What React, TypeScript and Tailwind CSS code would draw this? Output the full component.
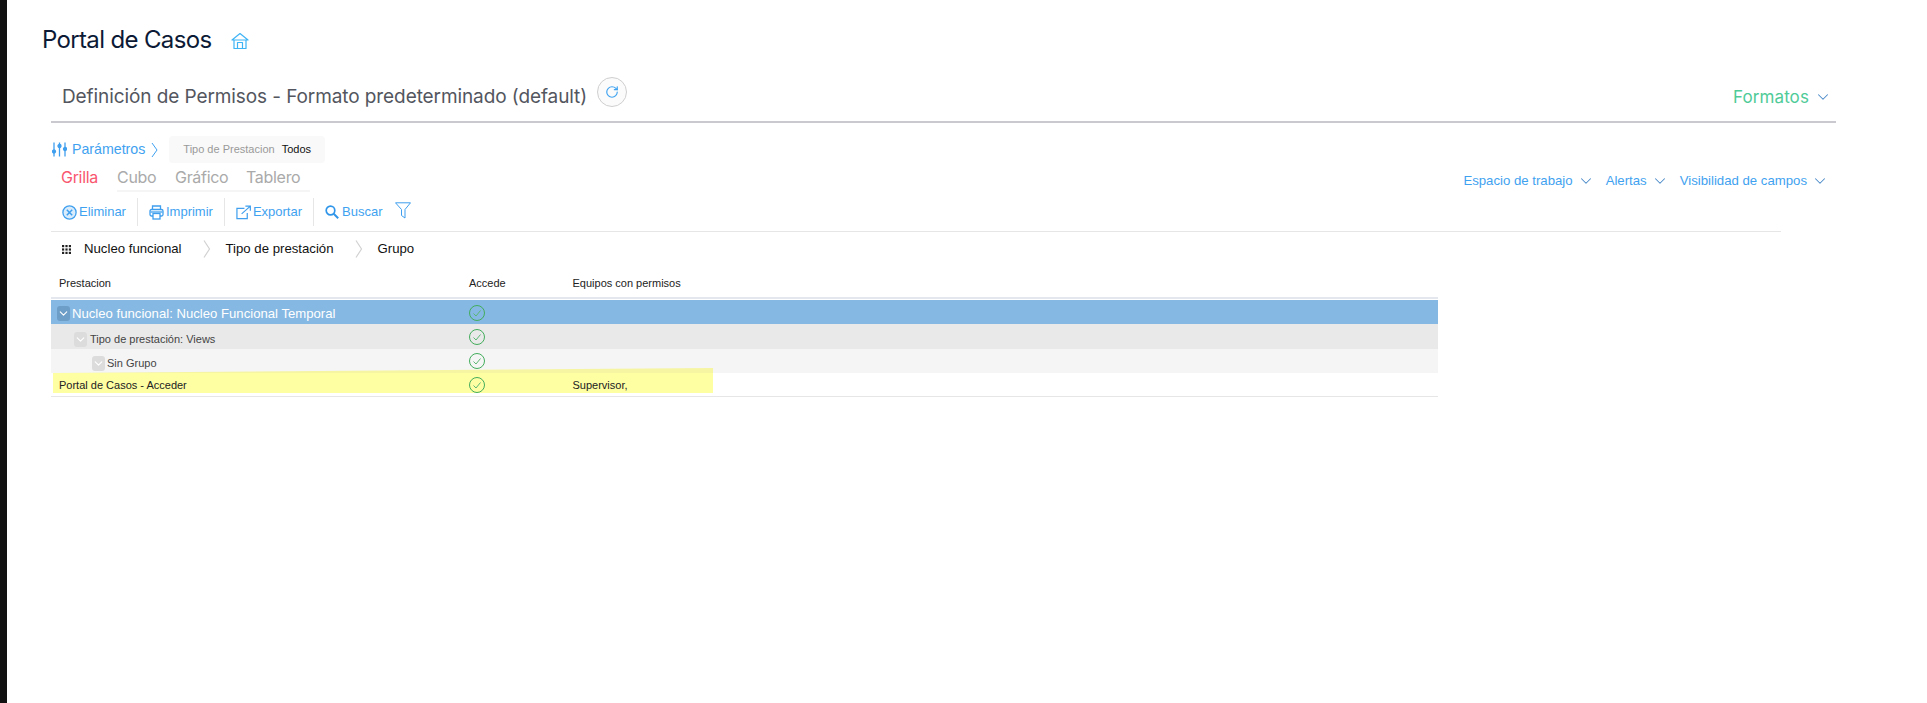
import { ChevronDown, RotateCw } from "lucide-react";

const sans = "font-['Liberation_Sans',Arial,sans-serif]";
const display = "font-['Inter','Noto_Sans',sans-serif]";

function HomeIcon() {
  return (
    <svg width="18" height="18" viewBox="0 0 18 18" fill="none" stroke="#3fb4f5" strokeWidth="1.2" strokeLinejoin="round">
      <path d="M1 8 L9 1.5 L17 8 Z" />
      <path d="M3 8 V16.5 H15 V8" />
      <path d="M6.5 16.5 V10.5 H11.5 V16.5" />
    </svg>
  );
}

function SlidersIcon() {
  return (
    <svg width="15" height="15" viewBox="0 0 15 15" fill="#3f9fee" stroke="#3f9fee" strokeWidth="1.3">
      <path d="M2 0.5 V14.5 M7.5 0.5 V14.5 M13 0.5 V14.5" />
      <circle cx="2" cy="9.5" r="1.5" />
      <circle cx="7.5" cy="4" r="1.5" />
      <circle cx="13" cy="7" r="1.5" />
    </svg>
  );
}

function EliminarIcon() {
  return (
    <svg width="15" height="15" viewBox="0 0 15 15" fill="none" stroke="#3f9fee" strokeWidth="1.3">
      <circle cx="7.5" cy="7.5" r="6.6" fill="#d9ecfb" />
      <path d="M4.8 4.8 L10.2 10.2 M10.2 4.8 L4.8 10.2" strokeWidth="1.5" />
    </svg>
  );
}

function PrintIcon() {
  return (
    <svg width="15" height="15" viewBox="0 0 15 15" fill="none" stroke="#3f9fee" strokeWidth="1.3">
      <path d="M3.5 4.5 V1 H11.5 V4.5" />
      <rect x="1" y="4.5" width="13" height="6.5" rx="1.5" />
      <rect x="4" y="8.5" width="7" height="5.5" fill="#fff" />
      <path d="M1.5 7 H13.5" />
    </svg>
  );
}

function ExportIcon() {
  return (
    <svg width="15" height="15" viewBox="0 0 16 15" fill="none" stroke="#3f9fee" strokeWidth="1.3">
      <path d="M9 3 H1 V14 H12 V8" />
      <path d="M6 9 L15 1 M10 0.8 H15.3 V5.5" />
    </svg>
  );
}

function SearchIcon() {
  return (
    <svg className="mr-[1px]" width="14" height="14" viewBox="0 0 14 14" fill="none" stroke="#2f95e8" strokeWidth="1.7">
      <circle cx="5.5" cy="5.5" r="4.3" />
      <path d="M8.7 8.7 L13.2 13.2" strokeWidth="2" />
    </svg>
  );
}

function FilterIcon() {
  return (
    <svg width="16" height="17" viewBox="0 0 16 17" fill="none" stroke="#3f9fee" strokeWidth="1" strokeLinejoin="round">
      <path d="M0.5 0.8 H15.5 L10 7.5 V16 L6.5 13.5 V7.5 Z" />
    </svg>
  );
}

function GridIcon() {
  return (
    <svg width="9" height="9" viewBox="0 0 9 9" fill="#222">
      {[0, 3.4, 6.8].map((y) =>
        [0, 3.4, 6.8].map((x) => <rect key={`${x}-${y}`} x={x} y={y} width="2.2" height="2.2" />),
      )}
    </svg>
  );
}

function CheckIcon() {
  return (
    <svg width="16" height="16" viewBox="0 0 16 16" fill="none" stroke="#43ad5c" strokeWidth="1">
      <circle cx="8" cy="8" r="7.5" />
      <path d="M4.5 8.5 L7 11 L11.5 5.5" stroke="#5cb874" />
    </svg>
  );
}

function Crumb() {
  return (
    <svg width="8" height="18" viewBox="0 0 8 18" fill="none" stroke="#d2d2d2" strokeWidth="1.2">
      <path d="M1 0.5 L6.5 9 L1 17.5" />
    </svg>
  );
}

function Toggle({ tone }: { tone: "blue" | "gray" }) {
  const box = tone === "blue" ? "bg-[#6d9ec8]" : "bg-[#dcdcdc]";
  return (
    <span className={`flex h-[15px] w-[13px] shrink-0 items-center justify-center rounded-[3px] ${box}`}>
      <ChevronDown size={13} strokeWidth={2} color="#fff" />
    </span>
  );
}

function Dropdown({ label }: { label: string }) {
  return (
    <span className="flex items-center gap-[4px]">
      <span className="text-[13.2px] text-[#3fa2f0]">{label}</span>
      <ChevronDown size={18} strokeWidth={1.4} color="#4a8ac8" />
    </span>
  );
}

function Action({ icon, label }: { icon: React.ReactNode; label: string }) {
  return (
    <span className="flex items-center gap-[2px] text-[13px] text-[#3fa2f0]">
      {icon}
      {label}
    </span>
  );
}

function Sep() {
  return <span className="mx-[11px] h-[28px] w-px bg-[#e6e6e6]" />;
}

export default function App() {
  return (
    <div className={`flex h-[703px] overflow-hidden bg-white ${sans}`}>
      <div className="w-[7px] shrink-0 bg-[#111111]" />
      <div className="flex-1">
        <div className="flex h-[78px] items-center pl-[35px] pt-[2px]">
          <h1 className={`text-[24px] leading-none tracking-[-0.65px] text-[#0c1a36] ${display}`}>Portal de Casos</h1>
          <span className="ml-[20px] mt-[2px]">
            <HomeIcon />
          </span>
        </div>

        <div className="ml-[44px] w-[1785px]">
          <div className="flex h-[45px] items-start border-b-2 border-[#c9c9cf] pl-[11px]">
            <span className={`mt-[7px] text-[19px] leading-[24px] tracking-[-0.09px] text-[#53565e] ${display}`}>
              Definición de Permisos - Formato predeterminado (default)
            </span>
            <span className="ml-[10px] -mt-[1px] flex h-[30px] w-[30px] items-center justify-center rounded-full border border-[#cfcfcf] bg-[#fbfbfb]">
              <RotateCw size={14} strokeWidth={2} color="#3fa2f0" />
            </span>
            <span className="ml-auto mr-[4px] mt-[8px] flex items-center gap-[5px]">
              <span className={`text-[17px] leading-[22px] tracking-[0.1px] text-[#4fcb98] ${display}`}>Formatos</span>
              <ChevronDown size={18} strokeWidth={1.4} color="#4a8ac8" />
            </span>
          </div>

          <div className="mt-[13px] flex h-[27px] items-center">
            <span className="ml-px">
              <SlidersIcon />
            </span>
            <span className="ml-[5px] text-[14.2px] text-[#3fa2f0]">Parámetros</span>
            <svg className="ml-[6px]" width="7" height="16" viewBox="0 0 7 16" fill="none" stroke="#3fa2f0" strokeWidth="1">
              <path d="M1 1 L6 8 L1 15" />
            </svg>
            <span className="ml-[11px] flex h-[27px] w-[156px] items-center rounded-[4px] bg-[#f9f9f9] pl-[14px] text-[11px]">
              <span className="text-[#999999]">Tipo de Prestacion</span>
              <span className="ml-[7px] text-[#111111]">Todos</span>
            </span>
          </div>

          <div className="flex items-start justify-between">
            <div className={`ml-[10px] mt-[3px] text-[16px] leading-[22px] tracking-[-0.3px] ${display}`}>
              <div className="flex items-start">
                <span className="w-[56px] text-[#f9566f]">Grilla</span>
                <span className="w-[58px] border-b-2 border-[#f5f5f5] pb-[2px] text-[#aaaaaa]">Cubo</span>
                <span className="w-[71px] border-b-2 border-[#f5f5f5] pb-[2px] text-[#aaaaaa]">Gráfico</span>
                <span className="w-[64px] border-b-2 border-[#f5f5f5] pb-[2px] text-[#aaaaaa]">Tablero</span>
              </div>
            </div>
            <div className="mr-[7px] mt-[8px] flex items-center gap-[11px]">
              <Dropdown label="Espacio de trabajo" />
              <Dropdown label="Alertas" />
              <Dropdown label="Visibilidad de campos" />
            </div>
          </div>

          <div className="mr-[55px] mt-[7px] flex h-[33px] items-center border-b border-[#e6e6e6] pb-[6px] pl-[11px]">
            <Action icon={<EliminarIcon />} label="Eliminar" />
            <Sep />
            <Action icon={<PrintIcon />} label="Imprimir" />
            <Sep />
            <Action icon={<ExportIcon />} label="Exportar" />
            <Sep />
            <Action icon={<SearchIcon />} label="Buscar" />
            <span className="ml-[12px] mb-[3px]">
              <FilterIcon />
            </span>
          </div>

          <div className="flex h-[34px] items-center pl-[11px] text-[13.2px] text-[#111111]">
            <GridIcon />
            <span className="ml-[13px]">Nucleo funcional</span>
            <span className="ml-[21px]">
              <Crumb />
            </span>
            <span className="ml-[15px]">Tipo de prestación</span>
            <span className="ml-[21px]">
              <Crumb />
            </span>
            <span className="ml-[15px]">Grupo</span>
          </div>

          <div className="relative w-[1387px] text-[11px]">
            <div className="flex h-[33px] items-center border-b-2 border-[#e4e8ee] pt-[4px] text-[#222222]">
              <span className="w-[418px] pl-[8px]">Prestacion</span>
              <span className="w-[103.5px]">Accede</span>
              <span>Equipos con permisos</span>
            </div>

            <div className="mt-[1px] flex h-[24px] items-center bg-[#85b8e2] pl-[6px] text-[13.15px] text-white">
              <span className="mt-[3px] flex w-[412px] items-center gap-[2px]">
                <Toggle tone="blue" />
                Nucleo funcional: Nucleo Funcional Temporal
              </span>
              <span className="mt-[2px]">
                <CheckIcon />
              </span>
            </div>
            <div className="flex h-[25px] items-center bg-[#e9e9e9] pl-[23px] text-[#444444]">
              <span className="mt-[5px] flex w-[395px] items-center gap-[3px]">
                <Toggle tone="gray" />
                Tipo de prestación: Views
              </span>
              <span className="mt-[1px]">
                <CheckIcon />
              </span>
            </div>
            <div className="flex h-[24px] items-center bg-[#f5f5f5] pl-[41px] text-[#444444]">
              <span className="mt-[4px] flex w-[377px] items-center gap-[2px]">
                <Toggle tone="gray" />
                Sin Grupo
              </span>
              <CheckIcon />
            </div>
            <div className="flex h-[24px] border-b border-[#e6e6e6] text-[#222222]">
              <div className="ml-[2px] flex h-[20px] w-[660px] items-center bg-[#fefea3] pl-[6px] pt-[3px]">
                <span className="mt-[2px] w-[410px]">Portal de Casos - Acceder</span>
                <span className="w-[103.5px]">
                  <CheckIcon />
                </span>
                <span className="mt-[2px]">Supervisor,</span>
              </div>
            </div>
            <div className="absolute left-[2px] top-[102px] h-[5px] w-[660px] bg-[#f6f5a2] [clip-path:polygon(0_100%,100%_0,100%_100%)]" />
          </div>
        </div>
      </div>
    </div>
  );
}
